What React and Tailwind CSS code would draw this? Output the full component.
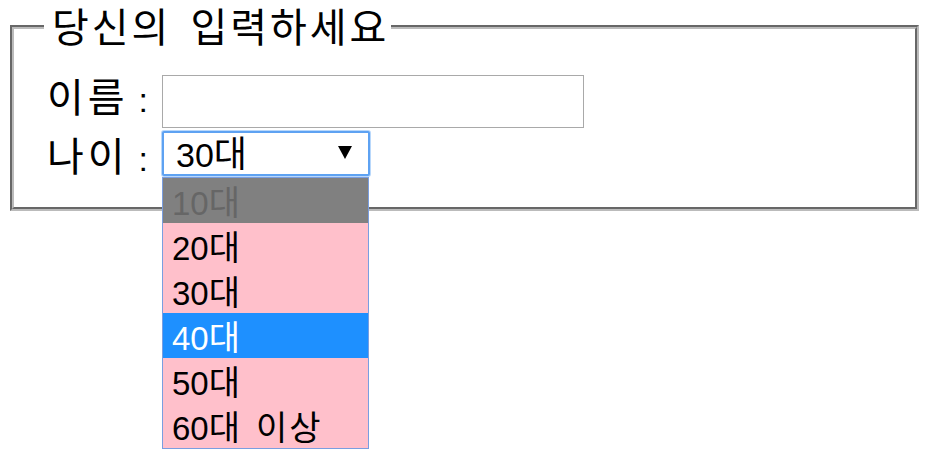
import React from "react";

const options = [
  { text: "10대", row: "bg-[#808080] text-[#666666]" },
  { text: "20대", row: "bg-[#ffc0cb] text-black" },
  { text: "30대", row: "bg-[#ffc0cb] text-black" },
  { text: "40대", row: "bg-[#1e90ff] text-white" },
  { text: "50대", row: "bg-[#ffc0cb] text-black" },
  { text: "60대 이상", row: "bg-[#ffc0cb] text-black" },
];

// split text into hangul / latin runs so each gets its own font
function Mixed({ text, latin, hangul }) {
  const parts = text.match(/[\uac00-\ud7a3]+|[^\uac00-\ud7a3]+/g) || [];
  return parts.map((p, i) =>
    /[\uac00-\ud7a3]/.test(p) ? (
      <span key={i} className={hangul}>{p}</span>
    ) : p === " " ? (
      <span key={i} className="inline-block w-[14px]" />
    ) : (
      <span key={i} className={latin}>{p}</span>
    )
  );
}

function Colon() {
  return (
    <span className="ml-[10px] tracking-normal font-['Liberation_Sans',sans-serif] text-[34px]">:</span>
  );
}

export default function App() {
  return (
    <div className="p-2 bg-white min-h-[466px] text-black">
      <fieldset className="mx-[2px] border-4 [--tw-border-style:groove] [border-style:groove] border-[#bbbbbb] px-[30px] pt-[29px] pb-[31px] m-0">
        <legend className="pl-[8px] pr-[2px] leading-[38px] font-['Noto_Sans_CJK_KR',sans-serif] text-[40px] tracking-[3px]">
          <span className="relative top-[-2px]">당신의</span>
          <span className="inline-block w-[19px]" />
          <span className="relative top-[-2px]">입력하세요</span>
        </legend>

        <div className="flex h-[53px] items-start">
          <div className="w-[118px] pl-[3px] h-[40px] leading-[40px] font-['Noto_Sans_CJK_KR',sans-serif] text-[40px] tracking-[4px]">
            이름<Colon />
          </div>
          <div className="w-[422px] h-[53px] border border-[#a9a9a9] bg-white" />
        </div>

        <div className="flex mt-[3px] h-[45px] items-start">
          <div className="w-[118px] pl-[3px] mt-[3px] h-[40px] leading-[40px] font-['Noto_Sans_CJK_KR',sans-serif] text-[40px] tracking-[4px]">
            나이<Colon />
          </div>
          <div className="relative">
            <div className="flex items-center w-[208px] h-[45px] border-2 border-[#5ea2f2] rounded-[2px] bg-white pl-[12px] pr-[16px] shadow-[0_0_0_1px_#b9d8fb]">
              <div className="flex-1 leading-[40px] pt-[4px] whitespace-nowrap">
                <Mixed
                  text="30대"
                  latin="font-['Liberation_Sans',sans-serif] text-[34px]"
                  hangul="font-['Noto_Sans_CJK_KR',sans-serif] text-[36px] tracking-[2px]"
                />
              </div>
              <svg width="14" height="13" viewBox="0 0 14 13" className="mb-[3px]">
                <polygon points="0,0 14,0 7,13" fill="#000" />
              </svg>
            </div>
            <div className="absolute z-10 left-0 top-[46px] w-[207px] border border-[#7a9ee0] bg-[#ffc0cb]">
              {options.map((o) => (
                <div
                  key={o.text}
                  className={`h-[45px] pl-[9px] leading-[45px] whitespace-nowrap ${o.row}`}
                >
                  <Mixed
                    text={o.text}
                    latin="font-['Liberation_Sans',sans-serif] text-[33px]"
                    hangul="font-['Noto_Sans_CJK_KR',sans-serif] text-[34px] tracking-[2px]"
                  />
                </div>
              ))}
            </div>
          </div>
        </div>
      </fieldset>
    </div>
  );
}
